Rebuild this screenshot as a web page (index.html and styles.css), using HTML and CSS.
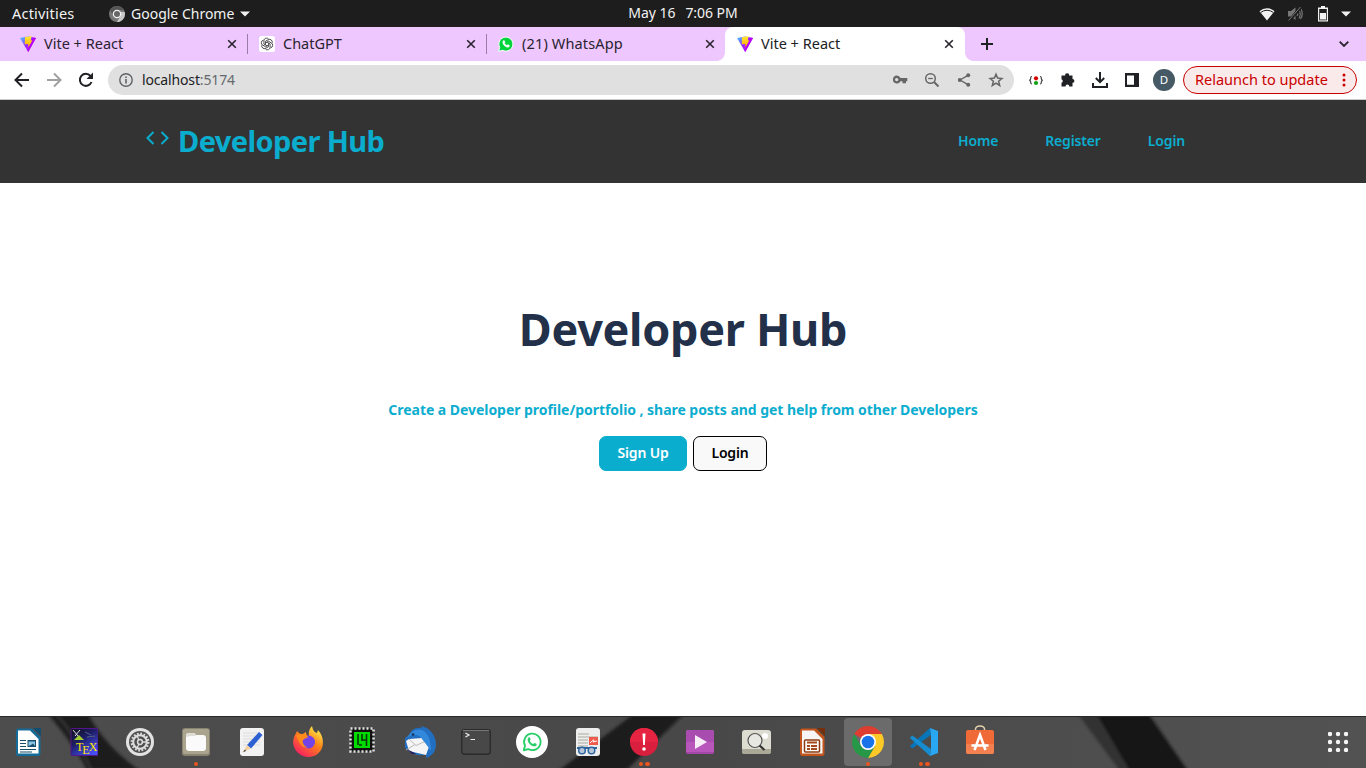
FILE: index.html
```html
<!DOCTYPE html>
<html lang="en">
<head>
<meta charset="utf-8">
<title>Vite + React</title>
<link rel="stylesheet" href="styles.css">
</head>
<body>
<svg class="defs" width="0" height="0" aria-hidden="true">
  <defs>
    <linearGradient id="viteA" x1="0" y1="0" x2="1" y2="1"><stop offset="0" stop-color="#41d1ff"/><stop offset=".5" stop-color="#a020ff"/><stop offset="1" stop-color="#bd34fe"/></linearGradient>
    <linearGradient id="viteB" x1="0" y1="0" x2="0" y2="1"><stop offset="0" stop-color="#ffea38"/><stop offset="1" stop-color="#ffa800"/></linearGradient>
    <symbol id="vite" viewBox="0 0 16 16"><path d="M0 2 8 .6 16 2 8.2 16Z" fill="url(#viteA)"/><path d="M12.5 1.5 16 2 8.2 16 7.4 14.5Z" fill="#b800fa"/><path d="M5 1.2 11.4 0 10.8 4.4 12.4 4.2 8.4 11.4 8.2 8 4.800 8.2Z" fill="url(#viteB)"/></symbol>
    <symbol id="close" viewBox="0 0 10 10"><path d="M1.2 1.2 8.8 8.8M8.8 1.2 1.2 8.8" stroke="#29232e" stroke-width="1.6"/></symbol>
    <symbol id="wa" viewBox="0 0 24 24"><path d="M3 21 4.4 16A9 9 0 1 1 8 19.7Z" fill="none" stroke="currentColor" stroke-width="2" stroke-linejoin="round"/><path d="M8.2 7.2c.7-.5 1.3-.3 1.6.4l.6 1.5c.2.6-.8 1.2-.7 1.7.7 1.5 1.9 2.6 3.5 3.3.6.1 1.1-1.2 1.7-1l1.8.9c.8.4.4 1.5-.1 2-2 1.6-4.7.3-6.7-1.4C7.6 12.6 6.3 9 8.2 7.2Z" fill="currentColor"/></symbol>
  </defs>
</svg>

<div class="topbar">
  <div class="topbar-side">
    <span class="activities">Activities</span>
    <span class="app-menu">
      <svg width="16" height="16" viewBox="0 0 16 16"><circle cx="8" cy="8" r="8" fill="#777"/><path d="M8 8V0a8 8 0 0 1 7 4H8A4 4 0 0 0 4.6 10L1 4A8 8 0 0 1 8 0Z" fill="#555"/><path d="M11.5 6H15.7A8 8 0 0 1 8 16L11.5 10Z" fill="#c8c8c8"/><circle cx="8" cy="8" r="4.3" fill="#f2f2f2"/><circle cx="8" cy="8" r="3" fill="#666"/></svg>
      <span class="app-name">Google Chrome</span>
      <svg width="10" height="6" viewBox="0 0 10 6"><path d="M0 .5H10L5 5.5Z" fill="#f2f2f2"/></svg>
    </span>
  </div>
  <div class="clock"><span>May 16</span><span>7:06 PM</span></div>
  <div class="topbar-side tray">
    <svg width="16" height="14" viewBox="0 0 16 14"><path d="M.5 4.2A11 11 0 0 1 15.5 4.200L8 13.500Z" fill="#f2f2f2"/><path d="M1.8 5.4A10 10 0 0 1 14.2 5.4" fill="none" stroke="#1d1d1d" stroke-width="1"/></svg>
    <svg width="16" height="16" viewBox="0 0 16 16"><path d="M1 5H4L8.5 1.5V14L4 10.5H1Z" fill="#777"/><path d="M10 6Q11.5 8 10 10M12 4Q14.5 8 12 12.5M13.500 2Q17 8 13.500 13" fill="none" stroke="#777" stroke-width="1.2"/><path d="M2 15 14 1" stroke="#1d1d1d" stroke-width="3"/><path d="M1.5 14.5 13.5 1" stroke="#777"/></svg>
    <svg width="10" height="16" viewBox="0 0 10 16"><path d="M3 0H7V1.5H10V15.5H0V1.5H3Z" fill="#f2f2f2"/><path d="M1.2 3H8.8V14.3H1.2Z" fill="#1d1d1d"/><path d="M2 7H8V13.5H2Z" fill="#f2f2f2"/></svg>
    <svg width="10" height="6" viewBox="0 0 10 6"><path d="M0 .5H10L5 5.5Z" fill="#f2f2f2"/></svg>
  </div>
</div>

<div class="tabs">
  <div class="tab"><svg width="16" height="16"><use href="#vite"/></svg><span class="tab-title">Vite + React</span><svg width="10" height="10"><use href="#close"/></svg></div>
  <div class="tab"><svg width="16" height="16" viewBox="0 0 16 16"><rect width="16" height="16" rx="2.5" fill="#fff"/><g fill="none" stroke="#333" stroke-width=".8"><path d="M8 9.900 4.900 8.100V4.800A2.700 2.700 0 0 1 9.600 3"/><path d="M8 9.900 4.900 8.100V4.800A2.700 2.700 0 0 1 9.600 3" transform="rotate(60 8 8)"/><path d="M8 9.900 4.900 8.100V4.800A2.700 2.700 0 0 1 9.600 3" transform="rotate(120 8 8)"/><path d="M8 9.900 4.900 8.100V4.800A2.700 2.700 0 0 1 9.600 3" transform="rotate(180 8 8)"/><path d="M8 9.900 4.900 8.100V4.800A2.700 2.700 0 0 1 9.600 3" transform="rotate(240 8 8)"/><path d="M8 9.900 4.900 8.100V4.800A2.700 2.700 0 0 1 9.600 3" transform="rotate(300 8 8)"/></g></svg><span class="tab-title">ChatGPT</span><svg width="10" height="10"><use href="#close"/></svg></div>
  <div class="tab tab-before-active"><svg width="16" height="16" viewBox="0 0 24 24"><path d="M1 23 2.500 17A10.500 10.500 0 1 1 7 21.500Z" fill="#00d33b" stroke="#fff" stroke-width="1.500"/><path d="M8.200 7.200c.7-.5 1.300-.3 1.600.4l.6 1.500c.2.6-.8 1.200-.7 1.700.7 1.500 1.900 2.600 3.500 3.300.6.100 1.100-1.200 1.700-1l1.800.9c.8.4.4 1.500-.1 2-2 1.600-4.700.3-6.700-1.400C7.600 12.600 6.300 9 8.200 7.200Z" fill="#fff" stroke="#fff"/></svg><span class="tab-title tab-title-wide">(21) WhatsApp</span><svg width="10" height="10"><use href="#close"/></svg></div>
  <div class="tab tab-active"><svg width="16" height="16"><use href="#vite"/></svg><span class="tab-title">Vite + React</span><svg width="10" height="10"><use href="#close"/></svg></div>
  <svg class="new-tab" width="12" height="12" viewBox="0 0 12 12"><path d="M6 0V12M0 6H12" stroke="#202124" stroke-width="2"/></svg>
  <svg class="tab-search" width="10" height="6" viewBox="0 0 10 6"><path d="M.7.7 5 5 9.3.7" fill="none" stroke="#29232e" stroke-width="1.8"/></svg>
</div>

<div class="toolbar">
  <div class="nav-buttons">
    <svg width="16" height="16" viewBox="0 0 16 16"><path d="M15 8H2M8 1.500 1.500 8 8 14.500" fill="none" stroke="#202124" stroke-width="2"/></svg>
    <svg width="16" height="16" viewBox="0 0 16 16"><path d="M1 8H14M8 1.500 14.500 8 8 14.500" fill="none" stroke="#a0a0a0" stroke-width="2"/></svg>
    <svg width="16" height="16" viewBox="0 0 16 16"><path d="M13.500 10A6 6 0 1 1 12.500 4" fill="none" stroke="#202124" stroke-width="2"/><path d="M15 .5V7H8.500Z" fill="#202124"/></svg>
  </div>
  <div class="omnibox">
    <svg width="14" height="14" viewBox="0 0 14 14"><circle cx="7" cy="7" r="6.200" fill="none" stroke="#5f6368" stroke-width="1.400"/><path d="M7 6V10.500M7 3.400V5" stroke="#5f6368" stroke-width="1.600"/></svg>
    <span class="url">localhost<span class="port">:5174</span></span>
    <div class="omni-icons">
      <svg width="16" height="16" viewBox="0 0 16 16"><path fill-rule="evenodd" d="M4.800 3.500A4 4 0 0 1 8.500 6H15.300V9.300H14V11.300H10.500V9.300H8.500A4 4 0 1 1 4.800 3.500ZM4.700 5.900A1.700 1.700 0 1 0 4.700 9.300 1.700 1.700 0 0 0 4.700 5.900Z" fill="#666"/></svg>
      <svg width="16" height="16" viewBox="0 0 16 16"><circle cx="6.500" cy="6.500" r="4.800" fill="none" stroke="#666" stroke-width="1.500"/><path d="M10 10 14.500 14.500" stroke="#666" stroke-width="1.900"/><path d="M4.200 6.500H8.800" stroke="#666" stroke-width="1.300"/></svg>
      <svg width="16" height="16" viewBox="0 0 16 16"><path d="M12 3.300 4 8 12 12.700" fill="none" stroke="#666" stroke-width="1.400"/><circle cx="12.200" cy="3.200" r="2" fill="#666"/><circle cx="3.800" cy="8" r="2" fill="#666"/><circle cx="12.200" cy="12.800" r="2" fill="#666"/></svg>
      <svg width="16" height="16" viewBox="0 0 16 16"><path d="M8 2.200 9.600 6.100 13.900 6.500 10.600 9.300 11.700 13.500 8 11.200 4.300 13.500 5.400 9.300 2.100 6.500 6.400 6.100Z" fill="none" stroke="#666" stroke-width="1.500"/></svg>
    </div>
  </div>
  <div class="extensions">
    <svg width="16" height="16" viewBox="0 0 16 16"><path d="M4 4.500Q2.500 4.500 2.700 6.500 2.800 8 1.300 8.300 2.800 8.600 2.700 10 2.500 12 4 12M12 4.500Q13.500 4.500 13.300 6.500 13.200 8 14.700 8.300 13.200 8.600 13.300 10 13.500 12 12 12" fill="none" stroke="#444" stroke-width="1.200"/><circle cx="8" cy="6.300" r="2.100" fill="#d40000"/><circle cx="8" cy="11" r="2.100" fill="#10a010"/></svg>
    <svg width="16" height="16" viewBox="0 0 16 16"><path d="M2.500 3.500H5.300A1.900 1.900 0 1 1 9 3.500H12.500V7A1.900 1.900 0 1 1 12.500 10.800V14.500H9.300A1.900 1.900 0 0 0 5.500 14.500H1.500V10.800A1.900 1.900 0 0 0 1.500 7.200V3.500Z" fill="#202124"/></svg>
    <svg width="16" height="16" viewBox="0 0 16 16"><path d="M8 0V9.500M3.800 6 8 10.200 12.200 6M1 11V15H15V11" fill="none" stroke="#202124" stroke-width="2"/></svg>
    <svg width="16" height="16" viewBox="0 0 16 16"><path fill-rule="evenodd" d="M1 1H15V15H1ZM3 3.500V12.800H10V3.500Z" fill="#202124"/></svg>
  </div>
  <span class="avatar">D</span>
  <div class="relaunch"><span>Relaunch to update</span><svg width="4" height="14" viewBox="0 0 4 14"><g fill="#c80000"><circle cx="2" cy="2" r="1.500"/><circle cx="2" cy="7" r="1.500"/><circle cx="2" cy="12" r="1.500"/></g></svg></div>
</div>

<header class="site-header">
  <div class="brand">
    <svg width="24" height="14" viewBox="0 0 24 14"><path d="M7.500 1 1.500 7 7.500 13M15.500 1 21.500 7 15.500 13" fill="none" stroke="#0badcf" stroke-width="2"/></svg>
    <span>Developer Hub</span>
  </div>
  <nav class="site-nav"><a>Home</a><a>Register</a><a>Login</a></nav>
</header>

<main class="hero">
  <h1>Developer Hub</h1>
  <p>Create a Developer profile/portfolio , share posts and get help from other Developers</p>
  <div class="actions"><button class="btn btn-primary">Sign Up</button><button class="btn">Login</button></div>
</main>

<footer class="dock">
  <svg class="dock-bg" width="1366" height="52" viewBox="0 0 1366 52">
    <defs><filter id="soft" x="-20%" y="-50%" width="140%" height="200%"><feGaussianBlur stdDeviation="1.500"/></filter>
    <linearGradient id="wall"><stop offset="0" stop-color="#4d4d4d"/><stop offset=".5" stop-color="#484848"/><stop offset="1" stop-color="#525252"/></linearGradient></defs>
    <rect width="1366" height="52" fill="url(#wall)"/>
    <g filter="url(#soft)"><path d="M48-2H88Q105 30 139 54H87Q75 30 48-2Z" fill="#1b1b1b"/><path d="M56-2Q78 22 91 54" fill="none" stroke="#383838" stroke-width="2"/><path d="M635-3H685L626 55H558Z" fill="#1b1b1b"/><path d="M1077-3H1148L1188 55H1120Z" fill="#303030"/><path d="M1096-3H1148L1188 55H1130Z" fill="#161616"/></g>
    <path d="M0 .5H1366" stroke="#292929"/>
  </svg>
  <div class="apps">
    <span class="app"><svg width="28" height="28" viewBox="0 0 28 28"><path d="M4 .5H18L26.500 9V25Q26.500 28 24 28H4Q2 28 2 25V3Q2 .5 4 .5Z" fill="#156b98"/><path d="M4 2.500H16L24.500 11V25.500H4Z" fill="#fff"/><path d="M19 0H27V8Z" fill="#114e70"/><path d="M6 12.500H12M6 15.500H12M6 18.500H12M6 21.500H22M6 24H18" stroke="#184e68" stroke-width="1.200"/><rect x="13.500" y="12" width="8.500" height="7" fill="#174e6d"/><path d="M14.500 18V13.500H21V18L19 15.500 17 17Z" fill="#8dc5e7"/></svg></span>
    <span class="app"><svg width="28" height="28" viewBox="0 0 28 28"><defs><linearGradient id="tex" x1="0" y1="0" x2=".7" y2="1"><stop offset="0" stop-color="#121018"/><stop offset=".45" stop-color="#1d1d66"/><stop offset="1" stop-color="#454ff2"/></linearGradient></defs><rect x="1" y=".5" width="27" height="27" rx="1" fill="url(#tex)" stroke="#54158b"/><path d="M4 12 9 7 14 12Z" fill="#a1cf31"/><path d="M3 2 8 8M5 8 10 2" stroke="#ddd"/><path d="M15 4 21 7M17 9 25 8" stroke="#526085"/></svg><span class="tex"><span>T</span><span class="tex-low">E</span><span>X</span></span></span>
    <span class="app"><svg width="28" height="28" viewBox="0 0 28 28"><circle cx="14" cy="14" r="14" fill="#e3e3e3"/><circle cx="14" cy="14" r="11" fill="#505050"/><circle cx="14" cy="14" r="8.200" fill="none" stroke="#ddd" stroke-width="2.500" stroke-dasharray="1.700 1.520"/><circle cx="14" cy="14" r="6.800" fill="none" stroke="#ddd" stroke-width="2"/><circle cx="14" cy="14" r="2.400" fill="none" stroke="#ddd" stroke-width="1.500"/><path d="M16 14H20M13 12 11 8M13 16 11 20" stroke="#ddd" stroke-width="1.300"/></svg></span>
    <span class="app"><svg width="28" height="28" viewBox="0 0 28 28"><rect width="28" height="28" rx="3" fill="#888270"/><rect x="1" y="1" width="26" height="25" rx="2" fill="#aaa38d"/><path d="M4 8Q4 5 7 5H11Q13 5 14 7H21Q24 7 24 10V20Q24 23 21 23H7Q4 23 4 20Z" fill="#fafafa"/><path d="M4 9V7Q4 5 7 5H11Q14 5 14 8H8Z" fill="#dedcd4"/></svg><i class="dots"><b></b></i></span>
    <span class="app"><svg width="28" height="28" viewBox="0 0 28 28"><rect x="2" width="24" height="28" rx="3" fill="#f2f2f2"/><path d="M5 5H22M5 8H22M5 11H22M5 14H22M5 17H22" stroke="#dcdcdc"/><path d="M9 17 21 4 24.500 7 13 20.500Z" fill="#2d60d2"/><path d="M9 17 13 20.500 5 24Z" fill="#f2cf9e"/><path d="M7 21.500 8 23 5 24.200Z" fill="#333"/></svg></span>
    <span class="app"><svg width="32" height="32" viewBox="0 0 32 32"><defs><linearGradient id="fox" x1="1" y1="0" x2=".3" y2="1"><stop offset=".1" stop-color="#fff44f"/><stop offset=".5" stop-color="#ff8316"/><stop offset="1" stop-color="#f51f62"/></linearGradient></defs><path d="M5 5Q7 8 10 8.500L14 6Q14 10 17 10Q16 4 20 0Q21 6 25 7L26 4Q33 12 30 22C27 29 21 31 16 31A15 15 0 0 1 2 11Z" fill="url(#fox)"/><circle cx="16.500" cy="16" r="6.500" fill="#7542e5"/><path d="M4 9Q14 6 16 11.500 12 12 10.500 15 11 20 16 21.500 10 22 7 16Z" fill="#ff8b1b"/></svg></span>
    <span class="app app-up"><svg width="26" height="26" viewBox="0 0 26 26"><rect x="1.500" y="1.500" width="23" height="23" fill="#171717" stroke="#e4e4e4" stroke-width="2.500" stroke-dasharray="2 2"/><rect x="3" y="3" width="20" height="20" rx="2" fill="#111"/><rect x="5" y="5" width="16" height="16" fill="#00dc00"/><path d="M9 7V18M10 18H13M13 7V14M17.500 7V19M13 13H17" fill="none" stroke="#083808" stroke-width="1.600"/></svg></span>
    <span class="app"><svg width="32" height="32" viewBox="0 0 32 32"><path d="M5 9Q9 0 18 2 18 1 16 0C26 1 32 10 32 18 32 26 28 30 22 32V28Q17 31 8 27L1 22V12Z" fill="#226ec0"/><path d="M5 13 18 12 26 18 22 29 5 25 2 15Z" fill="#f5f5f5"/><path d="M5 13 12 19.500 22 15M2 24 11 18.500" fill="none" stroke="#bbb"/><path d="M3 12Q8 2 18 4 27 8 27 25 22 18 18 13 15 8 8 9 4 11 3 12Z" fill="#3288da"/><circle cx="9" cy="8.500" r="1.300" fill="#17355d"/><path d="M3 23 12 28 8 28Z" fill="#26165c"/></svg></span>
    <span class="app"><svg width="30" height="26" viewBox="0 0 30 26"><rect x=".7" y=".7" width="28.600" height="24.600" rx="3" fill="#484848" stroke="#2b2b2b" stroke-width="1.400"/><path d="M2 1.500H28" stroke="#777"/><path d="M4.500 4 8 6 4.500 8M9.500 10.500H14" fill="none" stroke="#eee" stroke-width="1.200"/></svg></span>
    <span class="app"><svg width="32" height="32" viewBox="0 0 32 32"><circle cx="16" cy="16" r="16" fill="#fff"/><svg x="5" y="5" width="22" height="22" color="#25cf66"><use href="#wa"/></svg></svg></span>
    <span class="app"><svg width="26" height="28" viewBox="0 0 26 28"><rect x="1" width="24" height="28" rx="3" fill="#eee"/><path d="M3 6H14M3 9H23M3 12H13M3 15H13M3 18H13" stroke="#aaa99d"/><rect x="14" y="9" width="9" height="8" fill="#ee5a4b"/><path d="M15 15Q21 9 18 14L22 13" fill="none" stroke="#fff"/><path d="M2 20H22" stroke="#2d65a0" stroke-width="2"/><circle cx="7" cy="22.500" r="3.300" fill="#b8c6d7" stroke="#2d65a0" stroke-width="1.500"/><circle cx="16.500" cy="22.500" r="3.300" fill="#b8c6d7" stroke="#2d65a0" stroke-width="1.500"/></svg></span>
    <span class="app"><svg width="28" height="28" viewBox="0 0 28 28"><circle cx="14" cy="14" r="14" fill="#d91f3d"/><path d="M0 14A14 14 0 0 1 28 14Z" fill="#e62340"/><path d="M12.500 5.500H15.500L14.800 17H13.200Z" fill="#fff"/><circle cx="14" cy="21" r="1.800" fill="#fff"/></svg><i class="dots"><b></b><b></b></i></span>
    <span class="app"><svg width="28" height="24" viewBox="0 0 28 24"><rect width="28" height="24" rx="2" fill="#b856bb"/><path d="M0 12 28 12V2Q28 0 26 0H2Q0 0 0 2Z" fill="#a94caf"/><path d="M0 23H28" stroke="#8c3894" stroke-width="1"/><path d="M9 5 21 12 9 19Z" fill="#f6edf7"/></svg></span>
    <span class="app"><svg width="29" height="24" viewBox="0 0 29 24"><rect width="29" height="24" rx="3" fill="#dddcd1"/><path d="M0 19H29V22Q29 24 26 24H3Q0 24 0 22Z" fill="#aaa998"/><circle cx="23" cy="6" r="3" fill="#fff"/><circle cx="13" cy="10.500" r="7" fill="#e8e8e2" stroke="#555" stroke-width="1.200"/><path d="M17.500 15.500 22.500 20" stroke="#333" stroke-width="2.200"/></svg></span>
    <span class="app"><svg width="28" height="28" viewBox="0 0 28 28"><path d="M4 .5H18L26.500 9V25Q26.500 28 24 28H4Q2 28 2 25V3Q2 .5 4 .5Z" fill="#c3541c"/><path d="M4 2.500H16L24.500 11V25.500H4Z" fill="#f8f6f5"/><path d="M19 0H27V8Z" fill="#76300d"/><rect x="6.500" y="12" width="15" height="12" rx="1" fill="#fff" stroke="#8a3b11" stroke-width="1.500"/><path d="M9 14.500H19M9 18H12M13 18H19M9 21H12M13 21H19" stroke="#a44a1d" stroke-width="1.800"/></svg></span>
    <span class="app app-active"><svg width="32" height="32" viewBox="0 0 32 32"><path d="M16 16 2.144 8A16 16 0 0 1 29.856 8H16Z" fill="#df3d30"/><path d="M16 8H29.856A16 16 0 0 1 16 32L22.900 20Z" fill="#fdc926"/><path d="M2.144 8 9.100 20A8 8 0 0 0 22.900 20L16 32A16 16 0 0 1 2.144 8Z" fill="#279847"/><circle cx="16" cy="16" r="8" fill="#fff"/><circle cx="16" cy="16" r="6.300" fill="#1a73e8"/></svg><i class="dots"><b></b></i></span>
    <span class="app"><svg width="28" height="28" viewBox="0 0 28 28"><path d="M20 0 .5 17.500Q0 18.500.6 19L2.300 20.400 21 7Z" fill="#0875b8"/><path d="M20 28 .5 10.500Q0 9.500.6 9L2.300 7.600 21 21Z" fill="#168dd0"/><path d="M20 0 28 3V25L20 28 21 21V7Z" fill="#29a7f2"/></svg><i class="dots"><b></b><b></b></i></span>
    <span class="app app-bag"><svg width="28" height="30" viewBox="0 0 28 30"><path d="M9.500 7V4Q10 1 14 1T18.500 4V7" fill="none" stroke="#e5cfac" stroke-width="1.500"/><rect y="5" width="28" height="24" rx="2" fill="#ef6a36"/><path d="M0 19H28V27Q28 29 26 29H2Q0 29 0 27Z" fill="#f48050"/><path d="M8.500 25 14 10 19.500 25M5.500 20.500H22.500" fill="none" stroke="#fff" stroke-width="2.600"/></svg></span>
  </div>
  <svg class="app-grid" width="20" height="20" viewBox="0 0 20 20"><g fill="#f4f4f4"><circle cx="2" cy="2" r="2.200"/><circle cx="10" cy="2" r="2.200"/><circle cx="18" cy="2" r="2.200"/><circle cx="2" cy="10" r="2.200"/><circle cx="10" cy="10" r="2.200"/><circle cx="18" cy="10" r="2.200"/><circle cx="2" cy="18" r="2.200"/><circle cx="10" cy="18" r="2.200"/><circle cx="18" cy="18" r="2.200"/></g></svg>
</footer>
</body>
</html>
```

FILE: styles.css
```css
* { box-sizing: border-box; }
body {
  margin: 0;
  width: 1366px;
  height: 768px;
  overflow: hidden;
  display: flex;
  flex-direction: column;
  background: #fff;
  font-family: "Noto Sans", "Open Sans", sans-serif;
  font-size: 14px;
}
svg { display: block; flex: none; }
.defs { position: absolute; }

.topbar {
  height: 27px;
  flex: none;
  background: #1d1d1d;
  color: #f2f2f2;
  display: grid;
  grid-template-columns: 1fr auto 1fr;
  align-items: center;
  line-height: 26px;
}
.topbar-side { display: flex; align-items: center; }
.activities { font-size: 14.5px; line-height: 24px; padding-bottom: 2px; letter-spacing: .2px; margin-left: 12px; width: 97px; }
.app-menu { display: flex; align-items: center; gap: 6px; }
.clock { display: flex; gap: 10px; line-height: 24px; padding-bottom: 2px; letter-spacing: -.05px; }
.tray { justify-content: flex-end; padding-right: 15px; }
.tray svg:nth-child(2) { margin-left: 12px; }
.tray svg:nth-child(3) { margin-left: 15px; }
.tray svg:nth-child(4) { margin-left: 13px; }

.tabs {
  height: 34px;
  flex: none;
  background: #eec7ff;
  display: flex;
  align-items: center;
  padding-left: 9px;
}
.tab {
  position: relative;
  width: 239px;
  height: 34px;
  padding: 0 11px;
  display: flex;
  align-items: center;
  gap: 8px;
  color: #29232e;
  font-size: 14.5px;
}
.tab:not(.tab-active):not(.tab-before-active)::after {
  content: "";
  position: absolute;
  right: 0;
  top: 7px;
  width: 1px;
  height: 20px;
  background: #9b7ca8;
}
.tab-title { flex: 1; padding-bottom: 2px; }
.tab-title-wide { letter-spacing: .15px; }
.tab-active {
  width: 240px;
  margin-left: -1px;
  padding-left: 12px;
  background: #fff;
  border-radius: 8px 8px 0 0;
  color: #202124;
}
.tab-active::before, .tab-active::after {
  content: "";
  position: absolute;
  bottom: 0;
  width: 8px;
  height: 8px;
}
.tab-active::before { left: -8px; background: radial-gradient(circle at 0 0, #eec7ff 7.5px, #fff 8px); }
.tab-active::after { right: -8px; background: radial-gradient(circle at 100% 0, #eec7ff 7.5px, #fff 8px); }
.new-tab { margin-left: 16px; }
.tab-search { margin-left: auto; margin-right: 17px; }

.toolbar {
  height: 39px;
  flex: none;
  background: #fff;
  border-bottom: 1px solid #c9cbcd;
  display: flex;
  align-items: center;
  padding: 0 9px 0 14px;
}
.nav-buttons { display: flex; gap: 16px; }
.omnibox {
  width: 906px;
  height: 30px;
  margin-left: 14px;
  padding: 0 10px 0 11px;
  border-radius: 15px;
  background: #e0e0e0;
  display: flex;
  align-items: center;
}
.url { margin-left: 9px; padding-bottom: 2px; color: #202124; letter-spacing: -.15px; }
.port { color: #666a6e; }
.omni-icons { margin-left: auto; display: flex; gap: 16px; }
.extensions { display: flex; gap: 16px; margin-left: 14px; }
.avatar {
  width: 22px;
  height: 22px;
  margin-left: 13px;
  border-radius: 50%;
  background: #455a64;
  color: #fff;
  font-size: 11.5px;
  line-height: 22px;
  text-align: center;
}
.relaunch {
  width: 174px;
  height: 28px;
  margin-left: auto;
  padding: 0 10px 0 11px;
  border: 1px solid #c80000;
  border-radius: 14px;
  background: #fbeaea;
  color: #c80000;
  font-size: 14.5px;
  display: flex;
  align-items: center;
  justify-content: space-between;
  white-space: nowrap;
}
.relaunch span { padding-bottom: 2px; }

.site-header {
  height: 83px;
  flex: none;
  background: #333;
  color: #0badcf;
  display: flex;
  align-items: center;
  justify-content: space-between;
  padding: 0 181px 2px 146px;
}
.brand {
  display: flex;
  align-items: center;
  gap: 8px;
  font-size: 29px;
  font-weight: 700;
  letter-spacing: -.6px;
}
.brand svg { margin-top: -6px; }
.site-nav { display: flex; gap: 47px; font-weight: 600; letter-spacing: -.15px; }

.hero {
  flex: 1;
  display: flex;
  flex-direction: column;
  align-items: center;
  padding-top: 115px;
}
.hero h1 {
  margin: 0;
  color: #22304a;
  font-size: 45px;
  line-height: 62px;
  letter-spacing: -.3px;
}
.hero p {
  margin: 39px 0 0;
  color: #0badcf;
  font-weight: 700;
  line-height: 22px;
  letter-spacing: -.045px;
  white-space: nowrap;
}
.actions { display: flex; gap: 6px; margin-top: 15px; }
.btn {
  width: 74px;
  height: 35px;
  padding: 0 0 3px;
  border: 1px solid #000;
  border-radius: 7px;
  background: #f9f9f9;
  color: #000;
  font: 600 14px "Noto Sans", sans-serif;
  letter-spacing: -.15px;
}
.btn-primary { width: 88px; background: #0badcf; border-color: #0badcf; color: #fff; }

.dock {
  position: relative;
  height: 52px;
  flex: none;
  display: flex;
  align-items: center;
  justify-content: space-between;
  padding-right: 18px;
}
.dock-bg { position: absolute; left: 0; top: 0; }
.apps { position: relative; display: flex; }
.app {
  position: relative;
  width: 48px;
  height: 48px;
  margin: 0 4px;
  display: flex;
  align-items: center;
  justify-content: center;
  border-radius: 4px;
}
.app-up { padding: 0 4px 4px 0; }
.app-bag { padding-bottom: 4px; }
.app-active { background: #6b6b6b; }
.dots {
  position: absolute;
  bottom: 0;
  left: 0;
  right: 0;
  display: flex;
  justify-content: center;
  gap: 2px;
}
.dots b { width: 4.500px; height: 4.500px; border-radius: 50%; background: #e95420; }
.tex {
  position: absolute;
  left: 16px;
  top: 22px;
  display: flex;
  color: #ffe800;
  font: 12px/14px "Liberation Serif", serif;
}
.tex-low { margin: 3px -1px 0; }
.app-grid { position: relative; }
```
